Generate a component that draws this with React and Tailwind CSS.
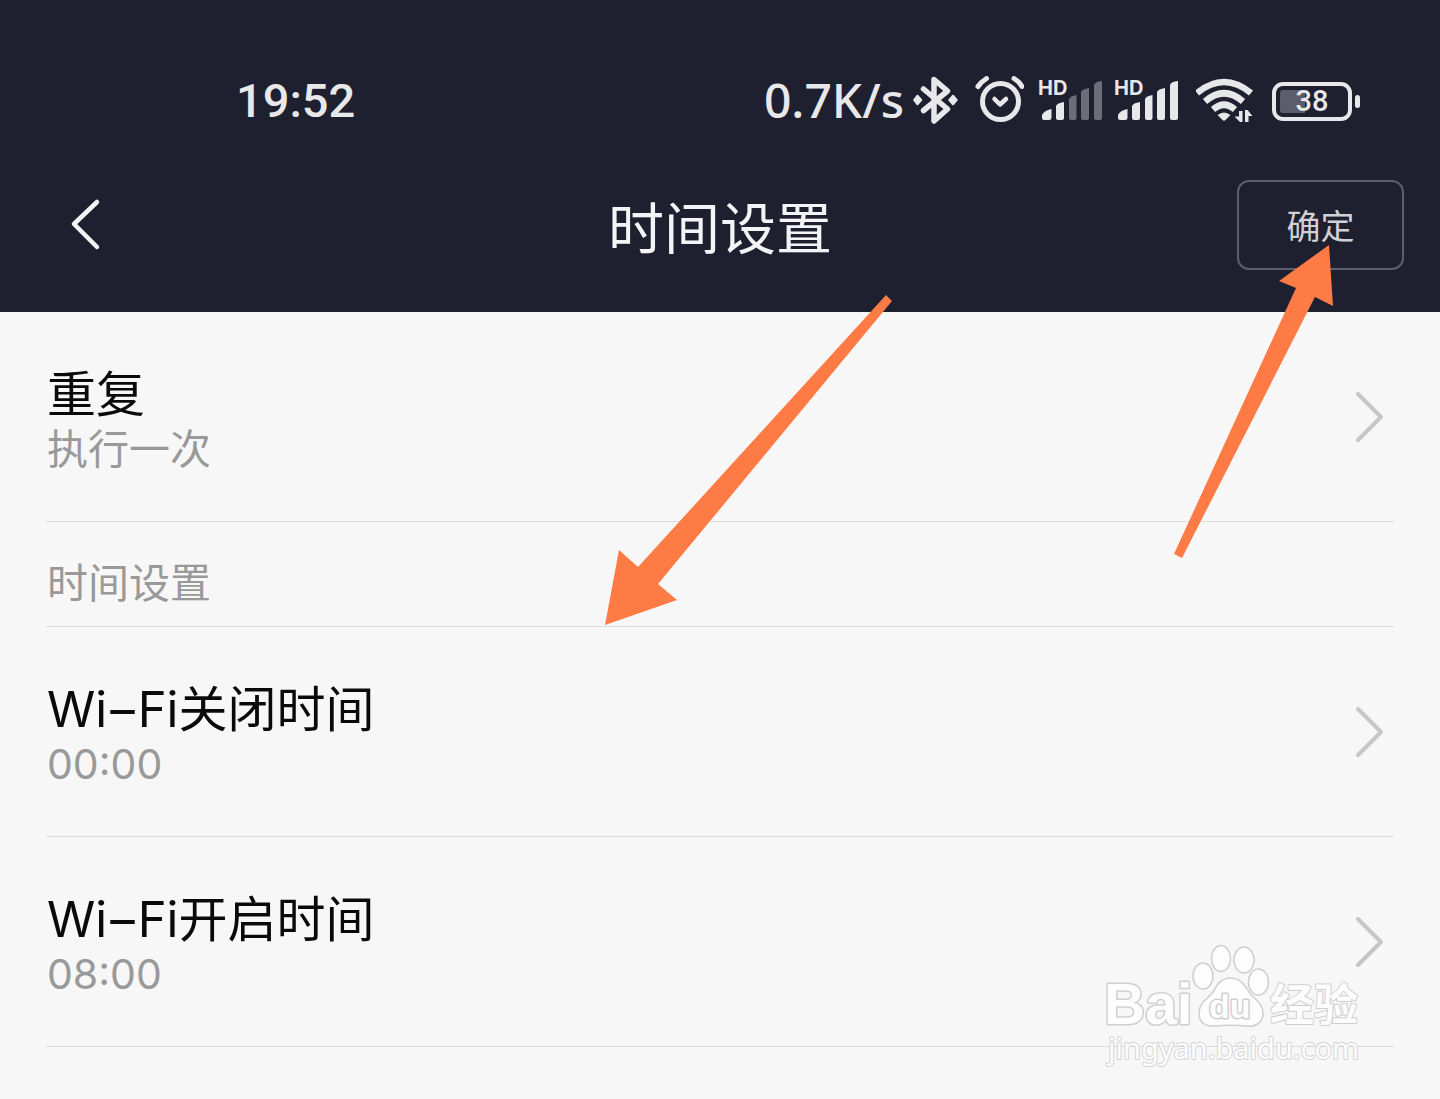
function Bluetooth() {
  return (
    <svg width="45" height="50" viewBox="0 0 45 50" fill="none" aria-label="蓝牙" role="img">
      <path
        d="M10.500 13L34.500 33L21 45V3.500L34.500 15L10.500 34.500"
        stroke="#e8e8ea"
        strokeWidth="5.500"
        strokeLinejoin="round"
        strokeLinecap="round"
      />
      <path d="M4.500 20L8 24L4.500 28L1.500 24ZM40 20L43.500 24L40 28L36.500 24Z" fill="#e8e8ea" stroke="#e8e8ea" strokeWidth="2.500" strokeLinejoin="round" />
    </svg>
  );
}

function Alarm() {
  return (
    <svg width="50" height="50" viewBox="0 0 50 50" fill="none" stroke="#e8e8ea" strokeLinecap="round" strokeLinejoin="round" aria-label="闹钟" role="img">
      <circle cx="26.500" cy="25.500" r="18" strokeWidth="5" />
      <path d="M20.500 23L26 28.500L32 23" strokeWidth="4.500" />
      <path d="M4 10.500Q7 6 12.500 2.500M48 10.500Q45.500 6 40 2.500" strokeWidth="5" />
    </svg>
  );
}

const BARS = [
  "M2 40V36Q4 31.500 11.500 30V38.500Q11.500 41 9 41H4Q2 41 2 39Z",
  "M16 39V27Q17 24 24 23V39Q24 41 22 41H18Q16 41 16 39Z",
  "M29 39V20Q30 17 36.500 16V39Q36.500 41 34.500 41H31Q29 41 29 39Z",
  "M41 39V13Q42 10 49 9V39Q49 41 47 41H43Q41 41 41 39Z",
  "M54 39V6Q55 2.500 62 2V39Q62 41 60 41H56Q54 41 54 39Z",
];

function Signal({ level }) {
  return (
    <svg width="64" height="44" viewBox="0 0 64 44" className="overflow-visible" aria-label={`信号 ${level}`} role="img">
      <text x="-2" y="16" fontSize="20" fontWeight="700" fill="#e8e8ea" className="font-['Inter',sans-serif]">
        HD
      </text>
      {BARS.map((d, i) => (
        <path key={d} d={d} fill={i < level ? "#e8e8ea" : "#6c6d78"} />
      ))}
    </svg>
  );
}

function Wifi() {
  return (
    <svg width="60" height="46" viewBox="0 0 60 46" fill="none" aria-label="无线网络" role="img">
      <g stroke="#e8e8ea" strokeWidth="6.500">
        <path d="M1 15Q28 -7 55 15" />
        <path d="M9 23.500Q28 7 47 23.500" />
        <path d="M17 31.500Q28 22 39 31.500" />
      </g>
      <path d="M21.500 37Q28 32 34.500 37L29.500 42Q28 43.500 26.500 42Z" fill="#e8e8ea" />
      <path d="M43 33H46.500V44H44L38.500 38.500H43ZM49 44V32H51.500L56.500 38H52.500V44Z" fill="#e8e8ea" />
    </svg>
  );
}

function Battery() {
  return (
    <div className="flex items-center gap-[3px]" aria-label="电量 38%">
      <div className="grid h-[39px] w-20 place-items-center rounded-[11px] border-4 border-[#e8e8ea] bg-linear-to-r from-[#5c5d6a] from-40% to-transparent to-40% bg-clip-content p-1">
        <span className="font-['Roboto',sans-serif] text-[29px] leading-[22px] font-medium">38</span>
      </div>
      <div className="h-[13px] w-[5px] rounded-sm bg-[#e8e8ea]" />
    </div>
  );
}

function Row({ title, value }) {
  return (
    <li className="border-b border-[#dcdcdc]">
      <button type="button" className="flex w-full items-center justify-between pt-[55px] pr-[10px] pb-[46px] pl-px text-left">
        <span className="flex flex-col">
          <span className="text-[49px] leading-[56px] text-[#0a0a0a]">{title}</span>
          <span className="text-[41px] leading-[52px] text-[#999999]">{value}</span>
        </span>
        <svg width="30" height="54" viewBox="0 0 30 54" fill="none" stroke="#c6c6c6" strokeWidth="4" strokeLinecap="round" strokeLinejoin="round" className="mb-2" aria-hidden="true">
          <path d="M4 4L27 27L4 50" />
        </svg>
      </button>
    </li>
  );
}

function WifiTitle({ children }) {
  return (
    <>
      Wi<span className="mx-[3px]">–</span>Fi{children}
    </>
  );
}

function Watermark() {
  return (
    <svg width="270" height="130" viewBox="0 0 270 130" className="pointer-events-none absolute right-[70px] bottom-[25px]" aria-label="Baidu 经验" role="img">
      <g fill="#fdfdfd" stroke="#cfcfcf" strokeWidth="1.500">
        <ellipse cx="103" cy="32" rx="10" ry="13" />
        <ellipse cx="121" cy="14.500" rx="9.500" ry="13" />
        <ellipse cx="144" cy="16" rx="10" ry="13" />
        <ellipse cx="158.500" cy="38" rx="10" ry="13" />
        <path d="M130 34C140 34 145 41 149 48C154 55 163 59 163 69C163 80 154 83 147 82C136 81 126 81 115 82C106 83 99 79 99 69C99 58 108 55 113 48C117 41 121 34 130 34Z" />
      </g>
      <g fill="#fdfdfd" stroke="#cfcfcf" strokeWidth="3" strokeLinejoin="round" className="font-bold">
        <text x="4" y="80" fontSize="57" paintOrder="stroke" className="font-['Liberation_Sans',sans-serif]">Bai</text>
        <text x="109" y="74" fontSize="34" paintOrder="stroke" className="font-['Liberation_Sans',sans-serif]">du</text>
        <text x="170" y="77" fontSize="44" strokeWidth="2" paintOrder="stroke" className="font-['Noto_Sans_CJK_SC',sans-serif]">经验</text>
      </g>
      <text x="8" y="115" fontSize="29" fill="#fdfdfd" stroke="#d4d4d4" strokeWidth="2" strokeLinejoin="round" paintOrder="stroke" className="font-['Noto_Sans',sans-serif]">
        jingyan.baidu.com
      </text>
    </svg>
  );
}

export default function App() {
  return (
    <div className="relative min-h-screen overflow-hidden bg-[#f7f7f7] font-['Inter','Noto_Sans_CJK_SC',sans-serif]">
      <header className="bg-[#1e1f2f] pt-[73px] pb-[42px] text-[#e8e8ea]">
        <div className="flex h-14 items-center justify-between pr-20 pl-[236px]">
          <time className="font-['Roboto',sans-serif] text-[47px] font-medium">19:52</time>
          <div className="flex items-center gap-4">
            <div className="flex items-center gap-2">
              <span className="pr-px pb-0.5 font-['Noto_Sans',sans-serif] text-5xl font-medium">0.7K/s</span>
              <Bluetooth />
            </div>
            <Alarm />
            <div className="flex gap-3">
              <Signal level={2} />
              <Signal level={5} />
            </div>
            <Wifi />
            <Battery />
          </div>
        </div>
        <div className="mt-[51px] grid h-[90px] grid-cols-[1fr_auto_1fr] items-center px-9">
          <button type="button" aria-label="返回" className="justify-self-start pl-[34px]">
            <svg width="32" height="54" viewBox="0 0 32 54" fill="none" stroke="#f4f4f6" strokeWidth="4.500" strokeLinecap="round" strokeLinejoin="round">
              <path d="M27 4L4 26L27 49" />
            </svg>
          </button>
          <h1 className="pt-2 text-[56px] leading-[64px] text-[#f4f4f6]">时间设置</h1>
          <button type="button" className="h-full w-[167px] justify-self-end rounded-xl border-2 border-[#5d5e6c] pt-[3px] text-[34px] text-[#d0d0d6]">
            确定
          </button>
        </div>
      </header>

      <main className="px-[46px]">
        <ul>
          <Row title="重复" value="执行一次" />
          <li className="border-b border-[#dcdcdc] pt-[35px] pb-[17px] pl-px">
            <h2 className="text-[41px] leading-[52px] text-[#999999]">时间设置</h2>
          </li>
          <Row title={<WifiTitle>关闭时间</WifiTitle>} value="00:00" />
          <Row title={<WifiTitle>开启时间</WifiTitle>} value="08:00" />
        </ul>
      </main>

      <svg width="290" height="332" viewBox="0 0 290 332" className="pointer-events-none absolute top-[294px] left-[42%]" aria-hidden="true">
        <path d="M0 331L14 256L33 273L281 1L287 7L53 290L72 306Z" fill="#ff7b46" />
      </svg>
      <svg width="162" height="314" viewBox="0 0 162 314" className="pointer-events-none absolute top-[245px] right-[106px]" aria-hidden="true">
        <path d="M157 0L107 36L124 43L2 309L10 313L143 52L161 61Z" fill="#ff7b46" />
      </svg>

      <Watermark />
    </div>
  );
}
